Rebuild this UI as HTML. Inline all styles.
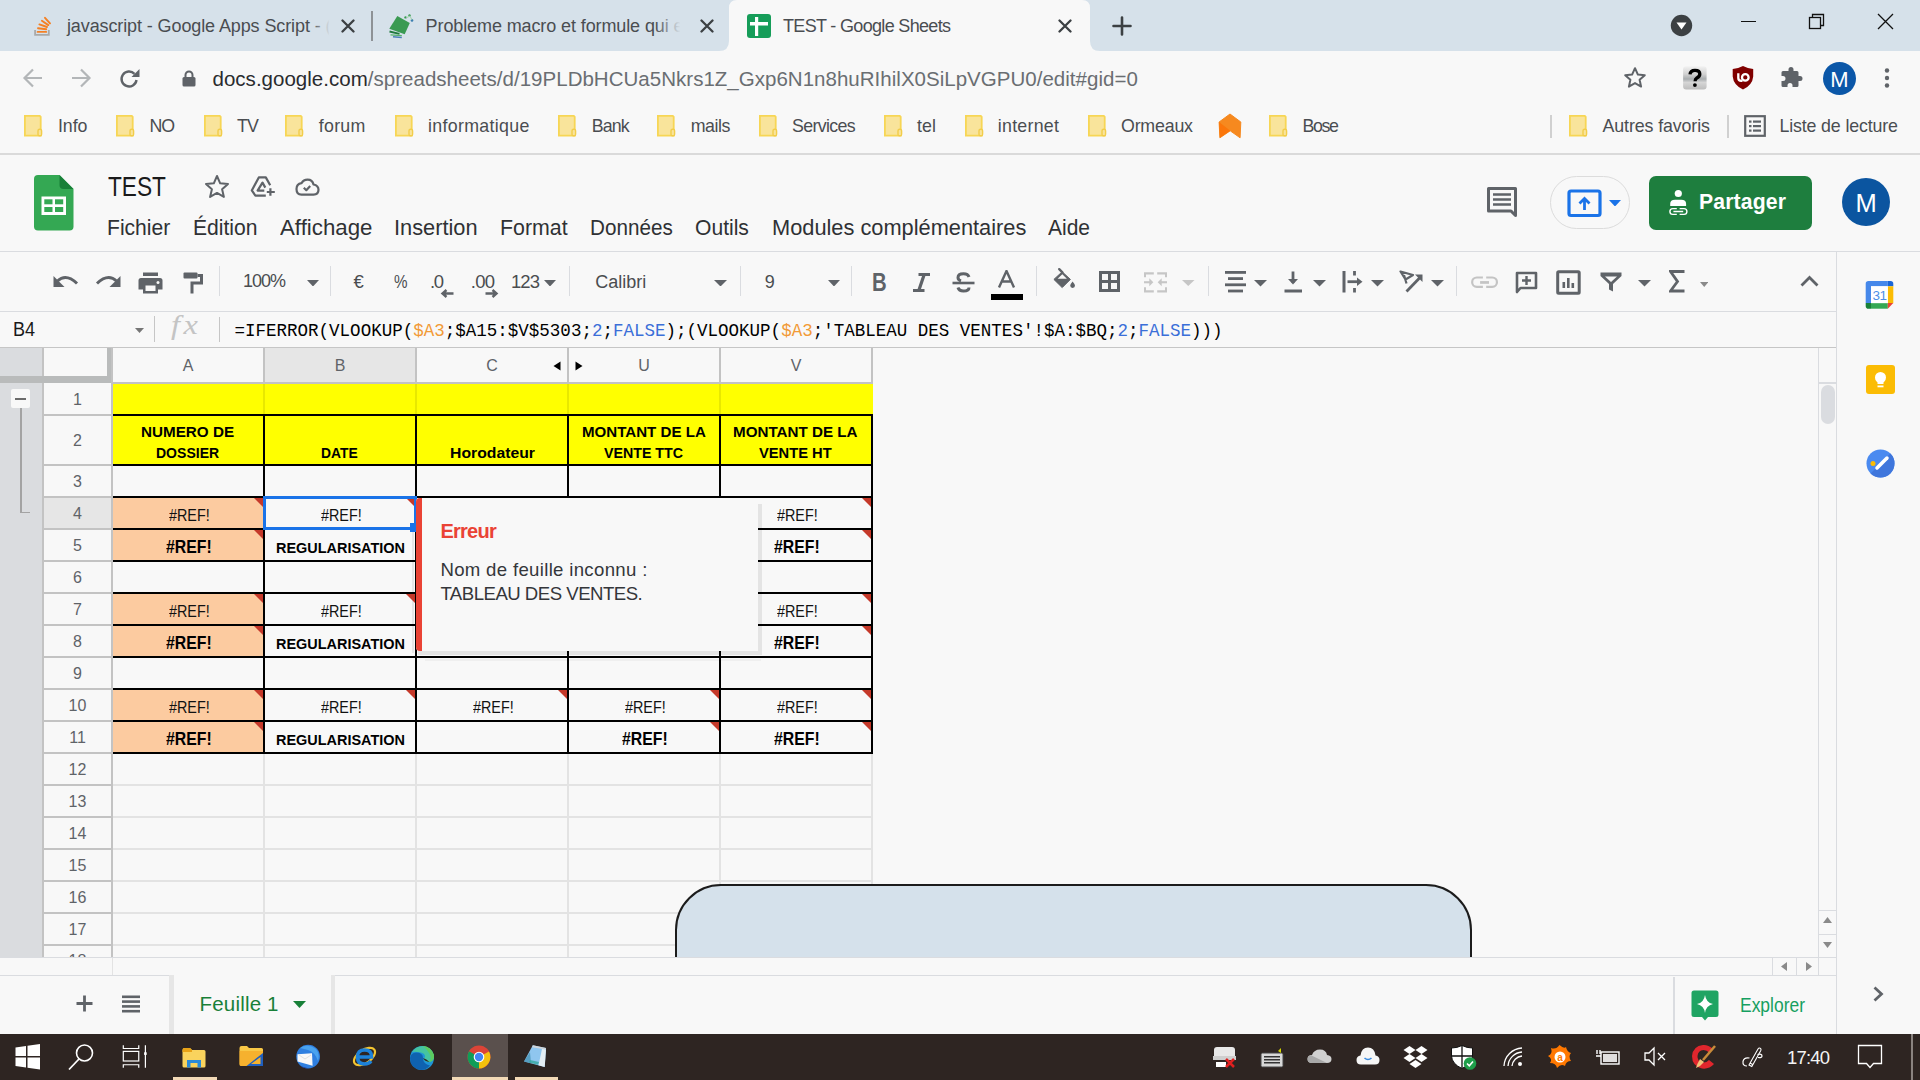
<!DOCTYPE html>
<html><head><meta charset="utf-8"><title>TEST - Google Sheets</title>
<style>
html,body{margin:0;padding:0;}
body{width:1920px;height:1080px;overflow:hidden;position:relative;background:#f8f8f8;font-family:"Liberation Sans",sans-serif;}
.t{position:absolute;white-space:pre;line-height:1;}
.r{position:absolute;display:block;}
</style></head><body>
<div class="r" style="left:0px;top:0px;width:1920px;height:51px;background:#d6e1ea;"></div>
<svg class="r" style="left:719px;top:0px;" width="382" height="51" viewBox="0 0 382 51"><path d="M0 51 Q10 51 10 41 L10 8 Q10 0 18 0 L363 0 Q371 0 371 8 L371 41 Q371 51 381 51 Z" fill="#f8f8f8"/></svg>
<svg class="r" style="left:28px;top:12px;" width="30" height="30" viewBox="0 0 30 30"><path d="M7.1 18 V22.9 H20.8 V18" fill="none" stroke="#a9a9a9" stroke-width="1.8"/><g stroke="#f48024" stroke-width="1.9" stroke-linecap="round"><line x1="9.6" y1="19.9" x2="18.2" y2="19.9"/><line x1="10" y1="16.2" x2="18.2" y2="17.3"/><line x1="11.4" y1="12.4" x2="19" y2="15"/><line x1="13.9" y1="8.8" x2="20.3" y2="13.1"/><line x1="17" y1="5.8" x2="22" y2="11.4"/></g></svg>
<div class="t" style="left:66.94px;top:16.76px;font-size:18.00px;color:#4a4d51;letter-spacing:-0.105px;">javascript - Google Apps Script - (</div>
<div class="r" style="left:312px;top:10px;width:22px;height:32px;background:linear-gradient(90deg,rgba(214,225,234,0),#d6e1ea 80%);"></div>
<svg class="r" style="left:341px;top:18.5px;" width="14" height="14" viewBox="0 0 14 14"><path d="M1.5 1.5 L12.5 12.5 M12.5 1.5 L1.5 12.5" stroke="#3c4043" stroke-width="2.3" stroke-linecap="round"/></svg>
<div class="r" style="left:371px;top:11px;width:2px;height:30px;background:#8e9296;"></div>
<svg class="r" style="left:384px;top:10px;" width="34" height="32" viewBox="0 0 34 32"><path d="M13.3 5.9 L25.8 13 L20.7 24.3 L5.3 18.7 Z" fill="#3a9a52"/><path d="M5.5 21.5 L15.5 23.8" stroke="#217a3e" stroke-width="1.8"/><path d="M6.5 24.8 L17.8 25.6" stroke="#55b06a" stroke-width="1.3"/><path d="M9 26.8 L17.8 27.5" stroke="#4a7fb8" stroke-width="1.4"/><circle cx="21.5" cy="7.4" r="1.2" fill="#3a9a52"/><circle cx="25.5" cy="5.4" r="1.2" fill="#3a9a52"/><circle cx="28" cy="10.4" r="1.3" fill="#3c7fb0"/><path d="M22 8 L26 6 L28 10" fill="none" stroke="#9fd0aa" stroke-width="1"/></svg>
<div class="t" style="left:425.60px;top:16.76px;font-size:18.00px;color:#4a4d51;letter-spacing:-0.106px;">Probleme macro et formule qui e</div>
<div class="r" style="left:655px;top:10px;width:30px;height:32px;background:linear-gradient(90deg,rgba(214,225,234,0),#d6e1ea 85%);"></div>
<svg class="r" style="left:699.5px;top:18.5px;" width="14" height="14" viewBox="0 0 14 14"><path d="M1.5 1.5 L12.5 12.5 M12.5 1.5 L1.5 12.5" stroke="#3c4043" stroke-width="2.3" stroke-linecap="round"/></svg>
<svg class="r" style="left:747px;top:14px;" width="24" height="24" viewBox="0 0 24 24"><rect x="0" y="0" width="24" height="24" rx="3" fill="#169d59"/><rect x="3" y="8" width="18" height="3.5" fill="#fff"/><rect x="8" y="3" width="3.2" height="19" fill="#fff"/></svg>
<div class="t" style="left:783.00px;top:16.76px;font-size:18.00px;color:#4a4d51;letter-spacing:-0.669px;">TEST - Google Sheets</div>
<svg class="r" style="left:1058px;top:18.5px;" width="14" height="14" viewBox="0 0 14 14"><path d="M1.5 1.5 L12.5 12.5 M12.5 1.5 L1.5 12.5" stroke="#3c4043" stroke-width="2.3" stroke-linecap="round"/></svg>
<svg class="r" style="left:1112px;top:16px;" width="20" height="20" viewBox="0 0 20 20"><path d="M10 1.5 V18.5 M1.5 10 H18.5" stroke="#3c4043" stroke-width="2.6" stroke-linecap="round"/></svg>
<svg class="r" style="left:1670px;top:14px;" width="23" height="23" viewBox="0 0 23 23"><circle cx="11.5" cy="11.5" r="10.7" fill="#3c4043"/><path d="M6.5 8.5 L16.5 8.5 L11.5 15.5 Z" fill="#fff"/></svg>
<div class="r" style="left:1741px;top:20.5px;width:15px;height:1.5px;background:#111;"></div>
<svg class="r" style="left:1808px;top:13px;" width="18" height="18" viewBox="0 0 18 18"><rect x="1.5" y="4.5" width="11" height="11" fill="none" stroke="#111" stroke-width="1.3"/><path d="M4.5 4.5 V1.5 H15.5 V12.5 H12.5" fill="none" stroke="#111" stroke-width="1.3"/></svg>
<svg class="r" style="left:1877px;top:13px;" width="17" height="17" viewBox="0 0 17 17"><path d="M1 1 L16 16 M16 1 L1 16" stroke="#111" stroke-width="1.3"/></svg>
<div class="r" style="left:0px;top:51px;width:1920px;height:102px;background:#f8f8f8;"></div>
<svg class="r" style="left:22px;top:67px;" width="22" height="22" viewBox="0 0 22 22"><path d="M20 11 H3 M11 2.5 L2.5 11 L11 19.5" fill="none" stroke="#b3b6b8" stroke-width="2.2"/></svg>
<svg class="r" style="left:70px;top:67px;" width="22" height="22" viewBox="0 0 22 22"><path d="M2 11 H19 M11 2.5 L19.5 11 L11 19.5" fill="none" stroke="#b3b6b8" stroke-width="2.2"/></svg>
<svg class="r" style="left:118px;top:67px;" width="24" height="24" viewBox="0 0 24 24"><path d="M18.5 13 A7.5 7.5 0 1 1 16.5 6.8" fill="none" stroke="#5f6368" stroke-width="2.4"/><path d="M21.5 2 V10 H13.5 Z" fill="#5f6368"/></svg>
<svg class="r" style="left:182px;top:70px;" width="14" height="17" viewBox="0 0 14 17"><path d="M3.5 7.5 V5 A3.5 3.5 0 0 1 10.5 5 V7.5" fill="none" stroke="#5f6368" stroke-width="2"/><rect x="0.5" y="7" width="13" height="9.5" rx="1.5" fill="#5f6368"/></svg>
<div class="t" style="left:212.5px;top:69.25px;font-size:20.5px;color:#6a6e72;letter-spacing:0.02px"><span style="color:#2a2b2e">docs.google.com</span>/spreadsheets/d/19PLDbHCUa5Nkrs1Z_Gxp6N1n8huRIhilX0SiLpVGPU0/edit#gid=0</div>
<svg class="r" style="left:1623px;top:66px;" width="24" height="24" viewBox="0 0 24 24"><path d="M12 2.2 L14.9 8.6 L21.8 9.2 L16.6 13.8 L18.1 20.6 L12 17.1 L5.9 20.6 L7.4 13.8 L2.2 9.2 L9.1 8.6 Z" fill="none" stroke="#5f6368" stroke-width="2" stroke-linejoin="round"/></svg>
<svg class="r" style="left:1678px;top:62px;" width="82" height="32" viewBox="0 0 82 32"><defs><linearGradient id="gq" x1="0" y1="0" x2="0" y2="1"><stop offset="0" stop-color="#f2f2f2"/><stop offset="0.35" stop-color="#d0d0d0"/><stop offset="0.55" stop-color="#a8acae"/><stop offset="0.7" stop-color="#d6d6d6"/><stop offset="1" stop-color="#bdbdbd"/></linearGradient></defs><rect x="5.1" y="4.3" width="23.5" height="23.1" rx="3" fill="url(#gq)"/><path d="M12 12.4 Q12.3 8.3 17 8.3 Q21.8 8.3 21.8 12 Q21.8 14.5 18.8 16 Q17.1 17 17.1 19.3" fill="none" stroke="#000" stroke-width="3.3"/><circle cx="16.9" cy="23.1" r="1.9" fill="#000"/><path d="M65 4.1 Q70 6.8 75.2 7 V14.5 Q74.5 23 65 27.6 Q55.5 23 54.7 14.5 V7 Q60 6.8 65 4.1 Z" fill="#800000"/><path d="M60.3 11.2 V16 Q60.3 18.8 63.3 18.8 H64.5" fill="none" stroke="#fff" stroke-width="2.3"/><circle cx="67.3" cy="15.4" r="3.3" fill="none" stroke="#fff" stroke-width="2.3"/></svg>
<svg class="r" style="left:1780px;top:66px;" width="24" height="24" viewBox="0 0 24 24"><path d="M8.5 3.5 A2.5 2.5 0 0 1 13.5 3.5 V5 H17 A1.5 1.5 0 0 1 18.5 6.5 V10 H20 A2.5 2.5 0 0 1 20 15 H18.5 V19.5 A1.5 1.5 0 0 1 17 21 H12.5 V19.5 A2.5 2.5 0 0 0 7.5 19.5 V21 H3 A1.5 1.5 0 0 1 1.5 19.5 V15 H3 A2.5 2.5 0 0 0 3 10 H1.5 V6.5 A1.5 1.5 0 0 1 3 5 H8.5 Z" fill="#5f6368"/></svg>
<svg class="r" style="left:1823px;top:62px;" width="33" height="33" viewBox="0 0 33 33"><circle cx="16.5" cy="16.5" r="16.5" fill="#0b57a8"/><text x="16.5" y="24.5" text-anchor="middle" font-family="Liberation Sans" font-size="22" fill="#fff">M</text></svg>
<svg class="r" style="left:1883px;top:68px;" width="8" height="20" viewBox="0 0 8 20"><circle cx="4" cy="2.5" r="2.2" fill="#5f6368"/><circle cx="4" cy="10" r="2.2" fill="#5f6368"/><circle cx="4" cy="17.5" r="2.2" fill="#5f6368"/></svg>
<svg class="r" style="left:24px;top:115px;" width="19" height="22" viewBox="0 0 19 22"><path d="M0.9 0.9 H15.8 L16.7 1.8 V20.6 H0.9 Z" fill="#f9e49b" stroke="#f7d655" stroke-width="1.8"/><rect x="14" y="14.2" width="3.6" height="6.6" rx="1.6" fill="#f9e49b" stroke="#f2cd4a" stroke-width="1.4"/></svg>
<div class="t" style="left:57.90px;top:118.03px;font-size:17.80px;color:#4a4d51;letter-spacing:-0.042px;">Info</div>
<svg class="r" style="left:116px;top:115px;" width="19" height="22" viewBox="0 0 19 22"><path d="M0.9 0.9 H15.8 L16.7 1.8 V20.6 H0.9 Z" fill="#f9e49b" stroke="#f7d655" stroke-width="1.8"/><rect x="14" y="14.2" width="3.6" height="6.6" rx="1.6" fill="#f9e49b" stroke="#f2cd4a" stroke-width="1.4"/></svg>
<div class="t" style="left:149.40px;top:118.03px;font-size:17.80px;color:#4a4d51;letter-spacing:-1.100px;">NO</div>
<svg class="r" style="left:204px;top:115px;" width="19" height="22" viewBox="0 0 19 22"><path d="M0.9 0.9 H15.8 L16.7 1.8 V20.6 H0.9 Z" fill="#f9e49b" stroke="#f7d655" stroke-width="1.8"/><rect x="14" y="14.2" width="3.6" height="6.6" rx="1.6" fill="#f9e49b" stroke="#f2cd4a" stroke-width="1.4"/></svg>
<div class="t" style="left:236.90px;top:118.03px;font-size:17.80px;color:#4a4d51;letter-spacing:-0.784px;">TV</div>
<svg class="r" style="left:285px;top:115px;" width="19" height="22" viewBox="0 0 19 22"><path d="M0.9 0.9 H15.8 L16.7 1.8 V20.6 H0.9 Z" fill="#f9e49b" stroke="#f7d655" stroke-width="1.8"/><rect x="14" y="14.2" width="3.6" height="6.6" rx="1.6" fill="#f9e49b" stroke="#f2cd4a" stroke-width="1.4"/></svg>
<div class="t" style="left:318.75px;top:118.03px;font-size:17.80px;color:#4a4d51;letter-spacing:0.283px;">forum</div>
<svg class="r" style="left:395px;top:115px;" width="19" height="22" viewBox="0 0 19 22"><path d="M0.9 0.9 H15.8 L16.7 1.8 V20.6 H0.9 Z" fill="#f9e49b" stroke="#f7d655" stroke-width="1.8"/><rect x="14" y="14.2" width="3.6" height="6.6" rx="1.6" fill="#f9e49b" stroke="#f2cd4a" stroke-width="1.4"/></svg>
<div class="t" style="left:428.00px;top:118.03px;font-size:17.80px;color:#4a4d51;letter-spacing:0.327px;">informatique</div>
<svg class="r" style="left:558px;top:115px;" width="19" height="22" viewBox="0 0 19 22"><path d="M0.9 0.9 H15.8 L16.7 1.8 V20.6 H0.9 Z" fill="#f9e49b" stroke="#f7d655" stroke-width="1.8"/><rect x="14" y="14.2" width="3.6" height="6.6" rx="1.6" fill="#f9e49b" stroke="#f2cd4a" stroke-width="1.4"/></svg>
<div class="t" style="left:591.75px;top:118.03px;font-size:17.80px;color:#4a4d51;letter-spacing:-0.854px;">Bank</div>
<svg class="r" style="left:657px;top:115px;" width="19" height="22" viewBox="0 0 19 22"><path d="M0.9 0.9 H15.8 L16.7 1.8 V20.6 H0.9 Z" fill="#f9e49b" stroke="#f7d655" stroke-width="1.8"/><rect x="14" y="14.2" width="3.6" height="6.6" rx="1.6" fill="#f9e49b" stroke="#f2cd4a" stroke-width="1.4"/></svg>
<div class="t" style="left:690.75px;top:118.03px;font-size:17.80px;color:#4a4d51;letter-spacing:-0.444px;">mails</div>
<svg class="r" style="left:758.75px;top:115px;" width="19" height="22" viewBox="0 0 19 22"><path d="M0.9 0.9 H15.8 L16.7 1.8 V20.6 H0.9 Z" fill="#f9e49b" stroke="#f7d655" stroke-width="1.8"/><rect x="14" y="14.2" width="3.6" height="6.6" rx="1.6" fill="#f9e49b" stroke="#f2cd4a" stroke-width="1.4"/></svg>
<div class="t" style="left:792.00px;top:118.03px;font-size:17.80px;color:#4a4d51;letter-spacing:-0.653px;">Services</div>
<svg class="r" style="left:883.75px;top:115px;" width="19" height="22" viewBox="0 0 19 22"><path d="M0.9 0.9 H15.8 L16.7 1.8 V20.6 H0.9 Z" fill="#f9e49b" stroke="#f7d655" stroke-width="1.8"/><rect x="14" y="14.2" width="3.6" height="6.6" rx="1.6" fill="#f9e49b" stroke="#f2cd4a" stroke-width="1.4"/></svg>
<div class="t" style="left:917.00px;top:118.03px;font-size:17.80px;color:#4a4d51;letter-spacing:0.066px;">tel</div>
<svg class="r" style="left:965px;top:115px;" width="19" height="22" viewBox="0 0 19 22"><path d="M0.9 0.9 H15.8 L16.7 1.8 V20.6 H0.9 Z" fill="#f9e49b" stroke="#f7d655" stroke-width="1.8"/><rect x="14" y="14.2" width="3.6" height="6.6" rx="1.6" fill="#f9e49b" stroke="#f2cd4a" stroke-width="1.4"/></svg>
<div class="t" style="left:997.80px;top:118.03px;font-size:17.80px;color:#4a4d51;letter-spacing:0.250px;">internet</div>
<svg class="r" style="left:1088px;top:115px;" width="19" height="22" viewBox="0 0 19 22"><path d="M0.9 0.9 H15.8 L16.7 1.8 V20.6 H0.9 Z" fill="#f9e49b" stroke="#f7d655" stroke-width="1.8"/><rect x="14" y="14.2" width="3.6" height="6.6" rx="1.6" fill="#f9e49b" stroke="#f2cd4a" stroke-width="1.4"/></svg>
<div class="t" style="left:1121.00px;top:118.03px;font-size:17.80px;color:#4a4d51;letter-spacing:-0.193px;">Ormeaux</div>
<svg class="r" style="left:1268.75px;top:115px;" width="19" height="22" viewBox="0 0 19 22"><path d="M0.9 0.9 H15.8 L16.7 1.8 V20.6 H0.9 Z" fill="#f9e49b" stroke="#f7d655" stroke-width="1.8"/><rect x="14" y="14.2" width="3.6" height="6.6" rx="1.6" fill="#f9e49b" stroke="#f2cd4a" stroke-width="1.4"/></svg>
<div class="t" style="left:1302.50px;top:118.03px;font-size:17.80px;color:#4a4d51;letter-spacing:-1.361px;">Bose</div>
<svg class="r" style="left:1210px;top:108px;" width="40" height="37" viewBox="0 0 40 37"><path d="M20 6 L30.8 14 L30.1 29.8 L20.2 22.8 L9.9 29.8 L9.1 14 Z" fill="#f6891f" stroke="#f6891f" stroke-width="1" stroke-linejoin="round"/><path d="M9.1 14 L20.2 22.8 L9.9 29.8 Z" fill="#fb760a"/></svg>
<div class="r" style="left:1550px;top:115px;width:1.5px;height:23px;background:#d0d0d0;"></div>
<svg class="r" style="left:1568.75px;top:115px;" width="19" height="22" viewBox="0 0 19 22"><path d="M0.9 0.9 H15.8 L16.7 1.8 V20.6 H0.9 Z" fill="#f9e49b" stroke="#f7d655" stroke-width="1.8"/><rect x="14" y="14.2" width="3.6" height="6.6" rx="1.6" fill="#f9e49b" stroke="#f2cd4a" stroke-width="1.4"/></svg>
<div class="t" style="left:1602.50px;top:118.03px;font-size:17.80px;color:#4a4d51;letter-spacing:-0.097px;">Autres favoris</div>
<div class="r" style="left:1727px;top:115px;width:1.5px;height:23px;background:#d0d0d0;"></div>
<svg class="r" style="left:1744px;top:115px;" width="22" height="22" viewBox="0 0 22 22"><rect x="1.2" y="1.2" width="19.6" height="19.6" fill="none" stroke="#5f6368" stroke-width="2.2"/><g fill="#5f6368"><rect x="5" y="5.5" width="2.5" height="2.2"/><rect x="9" y="5.5" width="8" height="2.2"/><rect x="5" y="10" width="2.5" height="2.2"/><rect x="9" y="10" width="8" height="2.2"/><rect x="5" y="14.5" width="2.5" height="2.2"/><rect x="9" y="14.5" width="8" height="2.2"/></g></svg>
<div class="t" style="left:1779.50px;top:118.03px;font-size:17.80px;color:#4a4d51;letter-spacing:-0.146px;">Liste de lecture</div>
<div class="r" style="left:0px;top:153px;width:1920px;height:2px;background:#dadada;"></div>
<svg class="r" style="left:34px;top:175px;" width="40" height="56" viewBox="0 0 40 56"><path d="M4 0 H25.5 L39.5 14 V51.5 Q39.5 55.5 35.5 55.5 H4 Q0 55.5 0 51.5 V4 Q0 0 4 0 Z" fill="#34a853"/><path d="M25.5 0 L39.5 14 H29.5 Q25.5 14 25.5 10 Z" fill="#188038"/><rect x="7.5" y="21.5" width="24.5" height="18.5" fill="#fff"/><rect x="10.3" y="24.3" width="8.2" height="5" fill="#34a853"/><rect x="21" y="24.3" width="8.2" height="5" fill="#34a853"/><rect x="10.3" y="32" width="8.2" height="5" fill="#34a853"/><rect x="21" y="32" width="8.2" height="5" fill="#34a853"/></svg>
<div class="t" style="left:108.30px;top:173.30px;font-size:28.00px;color:#1a1a1a;transform:scaleX(0.8092);transform-origin:0.00px 0;">TEST</div>
<svg class="r" style="left:204px;top:174px;" width="26" height="25" viewBox="0 0 26 25"><path d="M13 2 L16.2 9.3 L24 10 L18.1 15.2 L19.9 22.9 L13 18.9 L6.1 22.9 L7.9 15.2 L2 10 L9.8 9.3 Z" fill="none" stroke="#5f6368" stroke-width="2" stroke-linejoin="round"/></svg>
<svg class="r" style="left:245px;top:170px;" width="80" height="32" viewBox="0 0 80 32"><g fill="none" stroke="#5f6368" stroke-width="2.2" stroke-linejoin="round"><path d="M25.2 15.3 L20.8 7.4 H13.8 L6.8 20.4 L10.4 25.6 H20.8"/><path d="M20.3 17.6 L17.5 12.6 L12.6 20.6 H19.3"/><path d="M25.4 18.2 V25.8 M21.8 22 H29.8"/><path d="M56.5 24.6 Q51.5 24.6 51.5 19 Q51.5 14 56.5 13.2 Q58.5 9.6 62.5 9.6 Q67.5 9.6 68.5 14.5 Q73.5 15.5 73.5 19.8 Q73.5 24.6 68.5 24.6 Z"/><path d="M58.8 17.8 L61.3 20.2 L65.2 16"/></g></svg>
<div class="t" style="left:107.00px;top:216.55px;font-size:21.80px;color:#2f3134;transform:scaleX(0.9679);transform-origin:0.00px 0;">Fichier</div>
<div class="t" style="left:193.00px;top:216.55px;font-size:21.80px;color:#2f3134;transform:scaleX(0.9684);transform-origin:0.00px 0;">Édition</div>
<div class="t" style="left:280.00px;top:216.55px;font-size:21.80px;color:#2f3134;transform:scaleX(1.0213);transform-origin:0.00px 0;">Affichage</div>
<div class="t" style="left:394.00px;top:216.55px;font-size:21.80px;color:#2f3134;transform:scaleX(0.9999);transform-origin:0.00px 0;">Insertion</div>
<div class="t" style="left:500.00px;top:216.55px;font-size:21.80px;color:#2f3134;transform:scaleX(0.9797);transform-origin:0.00px 0;">Format</div>
<div class="t" style="left:590.00px;top:216.55px;font-size:21.80px;color:#2f3134;transform:scaleX(0.9484);transform-origin:0.00px 0;">Données</div>
<div class="t" style="left:695.00px;top:216.55px;font-size:21.80px;color:#2f3134;transform:scaleX(0.9676);transform-origin:0.00px 0;">Outils</div>
<div class="t" style="left:771.70px;top:216.55px;font-size:21.80px;color:#2f3134;transform:scaleX(0.9996);transform-origin:0.00px 0;">Modules complémentaires</div>
<div class="t" style="left:1048.00px;top:216.55px;font-size:21.80px;color:#2f3134;transform:scaleX(0.9633);transform-origin:0.00px 0;">Aide</div>
<svg class="r" style="left:1486px;top:186px;" width="32" height="31" viewBox="0 0 32 31"><path d="M2.5 2.5 H29.5 V25 L29.5 29.5 L25 25 H2.5 Z" fill="none" stroke="#5f6368" stroke-width="3" stroke-linejoin="round"/><path d="M7 8.5 H25 M7 13.5 H25 M7 18.5 H25" stroke="#5f6368" stroke-width="2.6"/></svg>
<div class="r" style="left:1550px;top:176px;width:80px;height:53px;border:1px solid #dcdcdc;border-radius:27px;box-sizing:border-box"></div>
<svg class="r" style="left:1567px;top:189px;" width="36" height="29" viewBox="0 0 36 29"><rect x="2" y="2" width="31" height="24.5" rx="2" fill="none" stroke="#1a73e8" stroke-width="3.2"/><path d="M17.5 21 V10 M12.5 14.5 L17.5 9.5 L22.5 14.5" fill="none" stroke="#1a73e8" stroke-width="2.8"/></svg>
<svg class="r" style="left:1609px;top:199.5px;" width="12" height="6.5" viewBox="0 0 12 6.5"><path d="M0 0 H12 L6.0 6.5 Z" fill="#1a73e8"/></svg>
<div class="r" style="left:1649px;top:176px;width:163px;height:54px;background:#1e7e3e;border-radius:7px"></div>
<svg class="r" style="left:1660px;top:182px;" width="36" height="36" viewBox="0 0 36 36"><circle cx="18.3" cy="11.5" r="3.6" fill="#fff"/><path d="M10.2 24.1 V22 Q10.2 17.8 15 17.8 H21.3 Q26.1 17.8 26.1 22 V24.1 Z" fill="#fff"/><g fill="none" stroke="#fff" stroke-width="1.4"><path d="M16.8 26.6 H12.8 A2.9 2.9 0 0 0 12.8 32.4 H16.8 M19.6 26.6 H24 A2.9 2.9 0 0 1 24 32.4 H19.6 M13.4 29.5 H23.2"/></g></svg>
<div class="t" style="left:1699.00px;top:191.05px;font-size:21.20px;color:#fff;font-weight:700;letter-spacing:0.133px;">Partager</div>
<svg class="r" style="left:1842px;top:178px;" width="48" height="48" viewBox="0 0 48 48"><circle cx="24" cy="24" r="24" fill="#0b55a0"/><text x="24" y="33.5" text-anchor="middle" font-family="Liberation Sans" font-size="25.5" fill="#fff">M</text></svg>
<div class="r" style="left:0px;top:251px;width:1920px;height:1px;background:#dadce0;"></div>
<svg class="r" style="left:53px;top:274px;" width="26" height="15" viewBox="0 0 26 15"><path d="M4.5 7 Q13 -1 24 9.5" fill="none" stroke="#5f6368" stroke-width="3"/><path d="M0.5 2 V13 H11.5 Z" fill="#5f6368"/></svg>
<svg class="r" style="left:95px;top:274px;" width="26" height="15" viewBox="0 0 26 15"><path d="M21.5 7 Q13 -1 2 9.5" fill="none" stroke="#5f6368" stroke-width="3"/><path d="M25.5 2 V13 H14.5 Z" fill="#5f6368"/></svg>
<svg class="r" style="left:138px;top:272px;" width="25" height="22" viewBox="0 0 25 22"><rect x="5" y="0.5" width="15" height="3.5" fill="#5f6368"/><path d="M3 6 H22 Q24.5 6 24.5 8.5 V17.5 H20 V21.5 H5 V17.5 H0.5 V8.5 Q0.5 6 3 6 Z" fill="#5f6368"/><rect x="7.5" y="13.5" width="10" height="5.5" fill="#f8f8f8"/><circle cx="20" cy="10.5" r="1.5" fill="#f8f8f8"/></svg>
<svg class="r" style="left:183px;top:272px;" width="20" height="22" viewBox="0 0 20 22"><rect x="0.5" y="0.5" width="14" height="6" rx="1" fill="#5f6368"/><path d="M14.5 3.5 H18.5 V11 H9 V21.5" fill="none" stroke="#5f6368" stroke-width="3"/></svg>
<div class="r" style="left:219px;top:266px;width:1px;height:30px;background:#dadce0;"></div>
<div class="t" style="left:243.00px;top:271.76px;font-size:18.00px;color:#4a4d50;letter-spacing:-1.027px;">100%</div>
<svg class="r" style="left:306.5px;top:279.5px;" width="12" height="6.5" viewBox="0 0 12 6.5"><path d="M0 0 H12 L6.0 6.5 Z" fill="#5f6368"/></svg>
<div class="r" style="left:330px;top:266px;width:1px;height:30px;background:#dadce0;"></div>
<div class="t" style="left:353.60px;top:272.94px;font-size:18.50px;color:#4a4d50;">€</div>
<div class="t" style="left:394.00px;top:272.94px;font-size:18.50px;color:#4a4d50;transform:scaleX(0.8199);transform-origin:0.00px 0;">%</div>
<div class="t" style="left:430.00px;top:272.94px;font-size:18.50px;color:#4a4d50;letter-spacing:-1.355px;">.0</div>
<svg class="r" style="left:440px;top:289px;" width="14" height="9" viewBox="0 0 14 9"><path d="M13.5 4.5 H3 M6.5 1 L2.5 4.5 L6.5 8" fill="none" stroke="#5f6368" stroke-width="2.4"/></svg>
<div class="t" style="left:470.80px;top:272.94px;font-size:18.50px;color:#4a4d50;letter-spacing:-0.758px;">.00</div>
<svg class="r" style="left:485px;top:289px;" width="14" height="9" viewBox="0 0 14 9"><path d="M0.5 4.5 H11 M7.5 1 L11.5 4.5 L7.5 8" fill="none" stroke="#5f6368" stroke-width="2.4"/></svg>
<div class="t" style="left:511.00px;top:272.64px;font-size:18.50px;color:#4a4d50;letter-spacing:-0.947px;">123</div>
<svg class="r" style="left:543.5px;top:279.7px;" width="12" height="6.5" viewBox="0 0 12 6.5"><path d="M0 0 H12 L6.0 6.5 Z" fill="#5f6368"/></svg>
<div class="r" style="left:569px;top:266px;width:1px;height:30px;background:#dadce0;"></div>
<div class="t" style="left:595.30px;top:272.76px;font-size:18.00px;color:#4a4d50;letter-spacing:0.010px;">Calibri</div>
<svg class="r" style="left:714px;top:279.7px;" width="13" height="6.5" viewBox="0 0 13 6.5"><path d="M0 0 H13 L6.5 6.5 Z" fill="#5f6368"/></svg>
<div class="r" style="left:740px;top:266px;width:1px;height:30px;background:#dadce0;"></div>
<div class="t" style="left:764.70px;top:272.76px;font-size:18.00px;color:#4a4d50;">9</div>
<svg class="r" style="left:827.5px;top:279.7px;" width="12" height="6.5" viewBox="0 0 12 6.5"><path d="M0 0 H12 L6.0 6.5 Z" fill="#5f6368"/></svg>
<div class="r" style="left:851px;top:266px;width:1px;height:30px;background:#dadce0;"></div>
<div class="t" style="left:872.00px;top:269.74px;font-size:25.00px;color:#5f6368;font-weight:700;transform:scaleX(0.8111);transform-origin:0.00px 0;">B</div>
<svg class="r" style="left:912px;top:273px;" width="19" height="19" viewBox="0 0 19 19"><path d="M6.5 1.5 H18 M1 17.5 H12.5 M12.2 1.5 L6.8 17.5" fill="none" stroke="#5f6368" stroke-width="3.2"/></svg>
<svg class="r" style="left:952px;top:272px;" width="23" height="21" viewBox="0 0 23 21"><path d="M0.5 11 H22.5" stroke="#5f6368" stroke-width="2.6"/><path d="M17 5 Q16 1.8 11.5 1.8 Q6 1.8 6 5.5 Q6 8 9 9" fill="none" stroke="#5f6368" stroke-width="3"/><path d="M6 15.5 Q7 19 11.5 19 Q17 19 17 15.5" fill="none" stroke="#5f6368" stroke-width="3"/></svg>
<svg class="r" style="left:998px;top:270px;" width="17" height="18" viewBox="0 0 17 18"><path d="M1 17.5 L8.5 1 L16 17.5 M4 11.5 H13" fill="none" stroke="#5f6368" stroke-width="2.4"/></svg>
<div class="r" style="left:991px;top:294px;width:32px;height:6px;background:#000;"></div>
<div class="r" style="left:1036px;top:266px;width:1px;height:30px;background:#dadce0;"></div>
<svg class="r" style="left:1045px;top:263px;" width="32" height="30" viewBox="0 0 32 30"><path d="M14.2 6.2 L17.4 9.3" stroke="#5f6368" stroke-width="2.4" stroke-linecap="round"/><path d="M17.2 8.8 L25.4 16.4 L17.2 24.6 L8.9 16.4 Z" fill="#5f6368" stroke="#5f6368" stroke-width="1" stroke-linejoin="round"/><path d="M17.3 11.2 L21.9 15.7 H12.6 Z" fill="#f8f8f8"/><path d="M27.6 18.6 Q30 21.5 30 22.6 A2.4 2.4 0 0 1 25.2 22.6 Q25.2 21.5 27.6 18.6 Z" fill="#5f6368"/></svg>
<svg class="r" style="left:1099px;top:271px;" width="21" height="21" viewBox="0 0 21 21"><rect x="1.5" y="1.5" width="18" height="18" fill="none" stroke="#5f6368" stroke-width="3"/><path d="M10.5 1.5 V19.5 M1.5 10.5 H19.5" stroke="#5f6368" stroke-width="3"/></svg>
<svg class="r" style="left:1136px;top:265px;" width="40" height="35" viewBox="0 0 40 35"><g fill="#c6c6c6"><path d="M8 7.2 H17.8 V9.5 H10 V12.3 H8 Z"/><path d="M31 7.2 H21.2 V9.5 H29 V12.3 H31 Z"/><path d="M8 27.5 H17.8 V25.2 H10 V22.2 H8 Z"/><path d="M31 27.5 H21.2 V25.2 H29 V22.2 H31 Z"/><rect x="8" y="16.2" width="6.5" height="2.1"/><path d="M13.3 13.3 L17.3 17.25 L13.3 21.3 Z"/><rect x="24.5" y="16.2" width="6.5" height="2.1"/><path d="M25.7 13.3 L21.7 17.25 L25.7 21.3 Z"/></g></svg>
<svg class="r" style="left:1182px;top:280px;" width="12.5" height="6" viewBox="0 0 12.5 6"><path d="M0 0 H12.5 L6.25 6 Z" fill="#c6c6c6"/></svg>
<div class="r" style="left:1208px;top:266px;width:1px;height:30px;background:#dadce0;"></div>
<svg class="r" style="left:1225px;top:271px;" width="22" height="22" viewBox="0 0 22 22"><g fill="#5f6368"><rect x="0" y="0" width="21" height="2.8"/><rect x="3" y="6.2" width="15" height="2.8"/><rect x="0" y="12.4" width="21" height="2.8"/><rect x="3" y="18.6" width="15" height="2.8"/></g></svg>
<svg class="r" style="left:1254px;top:280px;" width="13" height="6.5" viewBox="0 0 13 6.5"><path d="M0 0 H13 L6.5 6.5 Z" fill="#5f6368"/></svg>
<svg class="r" style="left:1284px;top:271px;" width="19" height="22" viewBox="0 0 19 22"><path d="M9 0.5 V12" stroke="#5f6368" stroke-width="2.8"/><path d="M4 8 L9 13.5 L14 8 Z" fill="#5f6368"/><rect x="0.5" y="18.5" width="17.5" height="3" fill="#5f6368"/></svg>
<svg class="r" style="left:1313px;top:280px;" width="13" height="6.5" viewBox="0 0 13 6.5"><path d="M0 0 H13 L6.5 6.5 Z" fill="#5f6368"/></svg>
<svg class="r" style="left:1342px;top:271px;" width="22" height="22" viewBox="0 0 22 22"><rect x="0.5" y="0" width="3" height="21.5" fill="#5f6368"/><path d="M12.5 0 V4.5 M12.5 17 V21.5" stroke="#5f6368" stroke-width="2.8"/><path d="M5.5 10.7 H17" stroke="#5f6368" stroke-width="2.8"/><path d="M15 6.5 L20.5 10.7 L15 15 Z" fill="#5f6368"/></svg>
<svg class="r" style="left:1371px;top:280px;" width="13" height="6.5" viewBox="0 0 13 6.5"><path d="M0 0 H13 L6.5 6.5 Z" fill="#5f6368"/></svg>
<svg class="r" style="left:1399px;top:270px;" width="25" height="23" viewBox="0 0 25 23"><path d="M1.5 1.5 L14 5 L6.5 9.5 Z M5 5 L7.5 13.5" fill="none" stroke="#5f6368" stroke-width="2.2" stroke-linejoin="round"/><path d="M7.5 21.5 L21.5 7" stroke="#5f6368" stroke-width="2.8"/><path d="M23.5 4.5 V12 L16 4.5 Z" fill="#5f6368"/></svg>
<svg class="r" style="left:1430.5px;top:280px;" width="13" height="6.5" viewBox="0 0 13 6.5"><path d="M0 0 H13 L6.5 6.5 Z" fill="#5f6368"/></svg>
<div class="r" style="left:1456px;top:266px;width:1px;height:30px;background:#dadce0;"></div>
<svg class="r" style="left:1465px;top:266px;" width="40" height="32" viewBox="0 0 40 32"><path d="M17.9 11.5 H11.8 A4.65 4.65 0 0 0 11.8 20.8 H17.9 M21.2 11.5 H27.3 A4.65 4.65 0 0 1 27.3 20.8 H21.2" fill="none" stroke="#c4c4c4" stroke-width="2.2"/><rect x="15.1" y="15.1" width="8.9" height="2.7" fill="#c4c4c4"/></svg>
<svg class="r" style="left:1515px;top:271px;" width="23" height="23" viewBox="0 0 23 23"><path d="M2 2 H21 V17 H5.5 L2 21 Z" fill="none" stroke="#5f6368" stroke-width="2.6" stroke-linejoin="round"/><path d="M11.5 5 V14 M7 9.5 H16" stroke="#5f6368" stroke-width="2.4"/></svg>
<svg class="r" style="left:1556px;top:270px;" width="25" height="25" viewBox="0 0 25 25"><rect x="1.7" y="1.7" width="21.5" height="21.5" rx="1" fill="none" stroke="#5f6368" stroke-width="3"/><rect x="6.5" y="12" width="2.6" height="6" fill="#5f6368"/><rect x="11" y="8" width="2.6" height="10" fill="#5f6368"/><rect x="15.5" y="13" width="2.6" height="5" fill="#5f6368"/></svg>
<svg class="r" style="left:1600px;top:272px;" width="22" height="20" viewBox="0 0 22 20"><path d="M0.5 0.5 H21.5 V4 L13 12 V19.5 L9 17.5 V12 L0.5 4 Z M5 4.5 L11 10 L17 4.5 Z" fill="#5f6368" fill-rule="evenodd"/></svg>
<svg class="r" style="left:1638px;top:280px;" width="13" height="6.5" viewBox="0 0 13 6.5"><path d="M0 0 H13 L6.5 6.5 Z" fill="#5f6368"/></svg>
<svg class="r" style="left:1669px;top:270px;" width="16" height="23" viewBox="0 0 16 23"><path d="M15.5 1.5 H1.5 L8.5 11.5 L1.5 21 H15.5" fill="none" stroke="#5f6368" stroke-width="2.8"/></svg>
<svg class="r" style="left:1699.5px;top:282px;" width="8.5" height="5" viewBox="0 0 8.5 5"><path d="M0 0 H8.5 L4.25 5 Z" fill="#8a8a8a"/></svg>
<svg class="r" style="left:1800px;top:275px;" width="19" height="12" viewBox="0 0 19 12"><path d="M1.5 10.5 L9.5 2.5 L17.5 10.5" fill="none" stroke="#5f6368" stroke-width="2.8"/></svg>
<div class="r" style="left:0px;top:311px;width:1836px;height:1px;background:#dadce0;"></div>
<div class="t" style="left:13.00px;top:318.95px;font-size:20.50px;color:#1a1a1a;transform:scaleX(0.8796);transform-origin:0.00px 0;">B4</div>
<svg class="r" style="left:135px;top:328px;" width="9" height="5" viewBox="0 0 9 5"><path d="M0 0 H9 L4.5 5 Z" fill="#767676"/></svg>
<div class="r" style="left:153.5px;top:316px;width:1.5px;height:26px;background:#c6c6c6;"></div>
<div class="t" style="left:171px;top:312.28px;font-size:27px;color:#c4c4c4;font-family:'Liberation Serif',serif;font-style:italic;letter-spacing:3px;transform:scaleX(1.2);transform-origin:0 0">fx</div>
<div class="r" style="left:218.5px;top:316.5px;width:1.5px;height:25px;background:#c6c6c6;"></div>
<div class="t" style="left:234.5px;top:322.78px;font-size:17.52px;color:#000;font-family:'Liberation Mono',monospace"><span>=IFERROR(VLOOKUP(</span><span style="color:#f29a36">$A3</span>;$A15:$V$5303;<span style="color:#3b6fd8">2</span>;<span style="color:#3b6fd8">FALSE</span>);(VLOOKUP(<span style="color:#f29a36">$A3</span>;'TABLEAU DES VENTES'!$A:$BQ;<span style="color:#3b6fd8">2</span>;<span style="color:#3b6fd8">FALSE</span>)))</div>
<div class="r" style="left:0px;top:347px;width:1836px;height:1px;background:#c6c6c6;"></div>
<div class="r" style="left:1836px;top:252px;width:1px;height:782px;background:#dadce0;"></div>
<svg class="r" style="left:1860px;top:275px;" width="40" height="40" viewBox="0 0 40 40"><path d="M8.5 5.9 H27.8 V11.3 H11 V28.1 H5.7 V8.7 Q5.7 5.9 8.5 5.9 Z" fill="#4688ea"/><path d="M27.8 5.9 H30.5 Q33.3 5.9 33.3 8.7 V11.3 H27.8 Z" fill="#1b66d6"/><rect x="27.8" y="11.3" width="5.5" height="16.8" fill="#fbbc04"/><rect x="11" y="28.1" width="16.8" height="5.6" fill="#34a853"/><path d="M5.7 28.1 H11 V33.7 H8.5 Q5.7 33.7 5.7 30.9 Z" fill="#188038"/><path d="M27.8 28.1 H33.3 L27.8 33.7 Z" fill="#ea4335"/><rect x="11" y="11.3" width="16.8" height="16.8" fill="#fff"/><text x="19.6" y="24.7" text-anchor="middle" font-family="Liberation Sans" font-size="13.5" fill="#4d8fe8" letter-spacing="-0.5">31</text></svg>
<svg class="r" style="left:1866px;top:365px;" width="29" height="29" viewBox="0 0 29 29"><rect x="0" y="0" width="29" height="29" rx="3" fill="#fbbc04"/><circle cx="14.5" cy="12.5" r="5.5" fill="#fff"/><rect x="11.5" y="15" width="6" height="4" fill="#fff"/><rect x="11.5" y="20.5" width="6" height="1.8" fill="#fff"/></svg>
<svg class="r" style="left:1866px;top:449px;" width="29" height="29" viewBox="0 0 29 29"><circle cx="14.5" cy="14.5" r="14" fill="#4a8af0"/><path d="M24.4 4.6 A14 14 0 0 1 4.6 24.4 Z" fill="#3f76dc"/><path d="M11 19 L21 9" stroke="#fff" stroke-width="3.5" stroke-linecap="round"/><circle cx="7" cy="14.5" r="2.5" fill="#fbbc04"/></svg>
<div class="r" style="left:0px;top:348px;width:42px;height:609px;background:#dadcdf;"></div>
<div class="r" style="left:42px;top:348px;width:2px;height:609px;background:#c3c3c3;"></div>
<div class="r" style="left:44px;top:348px;width:63px;height:28px;background:#f8f8f8;"></div>
<div class="r" style="left:107px;top:348px;width:5px;height:35px;background:#b9bbbb;"></div>
<div class="r" style="left:0px;top:376px;width:112px;height:7px;background:#b9bbbb;"></div>
<div class="r" style="left:112px;top:348px;width:761px;height:34px;background:#f8f8f8;"></div>
<div class="r" style="left:265px;top:348px;width:150px;height:34px;background:#e6e6e6;"></div>
<div class="r" style="left:263px;top:348px;width:2px;height:34px;background:#c3c3c3;"></div>
<div class="r" style="left:415px;top:348px;width:2px;height:34px;background:#c3c3c3;"></div>
<div class="r" style="left:567px;top:348px;width:2px;height:34px;background:#c3c3c3;"></div>
<div class="r" style="left:719px;top:348px;width:2px;height:34px;background:#c3c3c3;"></div>
<div class="r" style="left:871px;top:348px;width:2px;height:34px;background:#c3c3c3;"></div>
<div class="r" style="left:112px;top:382px;width:761px;height:2px;background:#c3c3c3;"></div>
<div class="t" style="left:182.64px;top:357.96px;font-size:16.00px;color:#5f6368;">A</div>
<div class="t" style="left:334.64px;top:357.96px;font-size:16.00px;color:#5f6368;">B</div>
<div class="t" style="left:486.24px;top:357.96px;font-size:16.00px;color:#5f6368;">C</div>
<div class="t" style="left:638.24px;top:357.96px;font-size:16.00px;color:#5f6368;">U</div>
<div class="t" style="left:790.64px;top:357.96px;font-size:16.00px;color:#5f6368;">V</div>
<svg class="r" style="left:553px;top:361px;" width="8" height="10" viewBox="0 0 8 10"><path d="M7.5 0.5 V9.5 L0.5 5 Z" fill="#000"/></svg>
<svg class="r" style="left:575px;top:361px;" width="8" height="10" viewBox="0 0 8 10"><path d="M0.5 0.5 V9.5 L7.5 5 Z" fill="#000"/></svg>
<div class="r" style="left:44px;top:384px;width:67px;height:573px;background:#f8f8f8;"></div>
<div class="r" style="left:44px;top:498px;width:67px;height:30px;background:#e6e6e6;"></div>
<div class="r" style="left:111px;top:348px;width:2px;height:609px;background:#c3c3c3;"></div>
<div class="r" style="left:44px;top:414px;width:67px;height:2px;background:#c3c3c3;"></div>
<div class="r" style="left:44px;top:464px;width:67px;height:2px;background:#c3c3c3;"></div>
<div class="r" style="left:44px;top:496px;width:67px;height:2px;background:#c3c3c3;"></div>
<div class="r" style="left:44px;top:528px;width:67px;height:2px;background:#c3c3c3;"></div>
<div class="r" style="left:44px;top:560px;width:67px;height:2px;background:#c3c3c3;"></div>
<div class="r" style="left:44px;top:592px;width:67px;height:2px;background:#c3c3c3;"></div>
<div class="r" style="left:44px;top:624px;width:67px;height:2px;background:#c3c3c3;"></div>
<div class="r" style="left:44px;top:656px;width:67px;height:2px;background:#c3c3c3;"></div>
<div class="r" style="left:44px;top:688px;width:67px;height:2px;background:#c3c3c3;"></div>
<div class="r" style="left:44px;top:720px;width:67px;height:2px;background:#c3c3c3;"></div>
<div class="r" style="left:44px;top:752px;width:67px;height:2px;background:#c3c3c3;"></div>
<div class="r" style="left:44px;top:784px;width:67px;height:2px;background:#c3c3c3;"></div>
<div class="r" style="left:44px;top:816px;width:67px;height:2px;background:#c3c3c3;"></div>
<div class="r" style="left:44px;top:848px;width:67px;height:2px;background:#c3c3c3;"></div>
<div class="r" style="left:44px;top:880px;width:67px;height:2px;background:#c3c3c3;"></div>
<div class="r" style="left:44px;top:912px;width:67px;height:2px;background:#c3c3c3;"></div>
<div class="r" style="left:44px;top:944px;width:67px;height:2px;background:#c3c3c3;"></div>
<div class="t" style="left:73.02px;top:391.96px;font-size:16.00px;color:#5f6368;">1</div>
<div class="t" style="left:73.02px;top:432.96px;font-size:16.00px;color:#5f6368;">2</div>
<div class="t" style="left:73.02px;top:473.96px;font-size:16.00px;color:#5f6368;">3</div>
<div class="t" style="left:73.02px;top:505.96px;font-size:16.00px;color:#5f6368;">4</div>
<div class="t" style="left:73.02px;top:537.96px;font-size:16.00px;color:#5f6368;">5</div>
<div class="t" style="left:73.02px;top:569.96px;font-size:16.00px;color:#5f6368;">6</div>
<div class="t" style="left:73.02px;top:601.96px;font-size:16.00px;color:#5f6368;">7</div>
<div class="t" style="left:73.02px;top:633.96px;font-size:16.00px;color:#5f6368;">8</div>
<div class="t" style="left:73.02px;top:665.96px;font-size:16.00px;color:#5f6368;">9</div>
<div class="t" style="left:68.62px;top:697.96px;font-size:16.00px;color:#5f6368;">10</div>
<div class="t" style="left:69.18px;top:729.96px;font-size:16.00px;color:#5f6368;">11</div>
<div class="t" style="left:68.62px;top:761.96px;font-size:16.00px;color:#5f6368;">12</div>
<div class="t" style="left:68.62px;top:793.96px;font-size:16.00px;color:#5f6368;">13</div>
<div class="t" style="left:68.62px;top:825.96px;font-size:16.00px;color:#5f6368;">14</div>
<div class="t" style="left:68.62px;top:857.96px;font-size:16.00px;color:#5f6368;">15</div>
<div class="t" style="left:68.62px;top:889.96px;font-size:16.00px;color:#5f6368;">16</div>
<div class="t" style="left:68.62px;top:921.96px;font-size:16.00px;color:#5f6368;">17</div>
<div class="r" style="left:44px;top:946px;width:67px;height:11px;overflow:hidden"><div class="t" style="left:24.62px;top:7.16px;font-size:16.00px;color:#5f6368;">18</div></div>
<div class="r" style="left:113px;top:384px;width:760px;height:573px;background:#f8f8f8;"></div>
<div class="r" style="left:113px;top:414px;width:760px;height:2px;background:#e3e3e3;"></div>
<div class="r" style="left:113px;top:464px;width:760px;height:2px;background:#e3e3e3;"></div>
<div class="r" style="left:113px;top:496px;width:760px;height:2px;background:#e3e3e3;"></div>
<div class="r" style="left:113px;top:528px;width:760px;height:2px;background:#e3e3e3;"></div>
<div class="r" style="left:113px;top:560px;width:760px;height:2px;background:#e3e3e3;"></div>
<div class="r" style="left:113px;top:592px;width:760px;height:2px;background:#e3e3e3;"></div>
<div class="r" style="left:113px;top:624px;width:760px;height:2px;background:#e3e3e3;"></div>
<div class="r" style="left:113px;top:656px;width:760px;height:2px;background:#e3e3e3;"></div>
<div class="r" style="left:113px;top:688px;width:760px;height:2px;background:#e3e3e3;"></div>
<div class="r" style="left:113px;top:720px;width:760px;height:2px;background:#e3e3e3;"></div>
<div class="r" style="left:113px;top:752px;width:760px;height:2px;background:#e3e3e3;"></div>
<div class="r" style="left:113px;top:784px;width:760px;height:2px;background:#e3e3e3;"></div>
<div class="r" style="left:113px;top:816px;width:760px;height:2px;background:#e3e3e3;"></div>
<div class="r" style="left:113px;top:848px;width:760px;height:2px;background:#e3e3e3;"></div>
<div class="r" style="left:113px;top:880px;width:760px;height:2px;background:#e3e3e3;"></div>
<div class="r" style="left:113px;top:912px;width:760px;height:2px;background:#e3e3e3;"></div>
<div class="r" style="left:113px;top:944px;width:760px;height:2px;background:#e3e3e3;"></div>
<div class="r" style="left:263px;top:384px;width:2px;height:573px;background:#e3e3e3;"></div>
<div class="r" style="left:415px;top:384px;width:2px;height:573px;background:#e3e3e3;"></div>
<div class="r" style="left:567px;top:384px;width:2px;height:573px;background:#e3e3e3;"></div>
<div class="r" style="left:719px;top:384px;width:2px;height:573px;background:#e3e3e3;"></div>
<div class="r" style="left:871px;top:384px;width:2px;height:573px;background:#e3e3e3;"></div>
<div class="r" style="left:113px;top:384px;width:760px;height:80px;background:#ffff00;"></div>
<div class="r" style="left:263px;top:384px;width:2px;height:30px;background:#e8e800;"></div>
<div class="r" style="left:415px;top:384px;width:2px;height:30px;background:#e8e800;"></div>
<div class="r" style="left:567px;top:384px;width:2px;height:30px;background:#e8e800;"></div>
<div class="r" style="left:719px;top:384px;width:2px;height:30px;background:#e8e800;"></div>
<div class="r" style="left:113px;top:498px;width:150px;height:30px;background:#fccba0;"></div>
<div class="r" style="left:113px;top:530px;width:150px;height:30px;background:#fccba0;"></div>
<div class="r" style="left:113px;top:594px;width:150px;height:30px;background:#fccba0;"></div>
<div class="r" style="left:113px;top:626px;width:150px;height:30px;background:#fccba0;"></div>
<div class="r" style="left:113px;top:690px;width:150px;height:30px;background:#fccba0;"></div>
<div class="r" style="left:113px;top:722px;width:150px;height:30px;background:#fccba0;"></div>
<div class="r" style="left:758px;top:504px;width:4px;height:151px;background:#e4e4e4;"></div>
<div class="r" style="left:418px;top:651px;width:344px;height:4px;background:#e4e4e4;border-radius:0 0 3px 0"></div>
<div class="r" style="left:412px;top:528px;width:2px;height:125px;background:#e6e6e6;"></div>
<div class="r" style="left:425px;top:659px;width:336px;height:2px;background:#efefef;"></div>
<div class="r" style="left:113px;top:414px;width:760px;height:2px;background:#000;"></div>
<div class="r" style="left:113px;top:464px;width:760px;height:2px;background:#000;"></div>
<div class="r" style="left:113px;top:496px;width:760px;height:2px;background:#000;"></div>
<div class="r" style="left:113px;top:528px;width:760px;height:2px;background:#000;"></div>
<div class="r" style="left:113px;top:560px;width:760px;height:2px;background:#000;"></div>
<div class="r" style="left:113px;top:592px;width:760px;height:2px;background:#000;"></div>
<div class="r" style="left:113px;top:624px;width:760px;height:2px;background:#000;"></div>
<div class="r" style="left:113px;top:656px;width:760px;height:2px;background:#000;"></div>
<div class="r" style="left:113px;top:688px;width:760px;height:2px;background:#000;"></div>
<div class="r" style="left:113px;top:720px;width:760px;height:2px;background:#000;"></div>
<div class="r" style="left:113px;top:752px;width:760px;height:2px;background:#000;"></div>
<div class="r" style="left:263px;top:414px;width:2px;height:340px;background:#000;"></div>
<div class="r" style="left:415px;top:414px;width:2px;height:340px;background:#000;"></div>
<div class="r" style="left:567px;top:414px;width:2px;height:340px;background:#000;"></div>
<div class="r" style="left:719px;top:414px;width:2px;height:340px;background:#000;"></div>
<div class="r" style="left:871px;top:414px;width:2px;height:340px;background:#000;"></div>
<div class="t" style="left:141.30px;top:423.95px;font-size:15.30px;color:#000;font-weight:700;transform:scaleX(0.9959);transform-origin:0.00px 0;">NUMERO DE</div>
<div class="t" style="left:156.30px;top:445.15px;font-size:15.30px;color:#000;font-weight:700;transform:scaleX(0.9165);transform-origin:0.00px 0;">DOSSIER</div>
<div class="t" style="left:321.30px;top:444.75px;font-size:15.30px;color:#000;font-weight:700;transform:scaleX(0.9052);transform-origin:0.00px 0;">DATE</div>
<div class="t" style="left:449.60px;top:444.75px;font-size:15.30px;color:#000;font-weight:700;transform:scaleX(1.0307);transform-origin:0.00px 0;">Horodateur</div>
<div class="t" style="left:581.90px;top:423.95px;font-size:15.30px;color:#000;font-weight:700;transform:scaleX(0.9868);transform-origin:0.00px 0;">MONTANT DE LA</div>
<div class="t" style="left:604.40px;top:444.65px;font-size:15.30px;color:#000;font-weight:700;transform:scaleX(0.9298);transform-origin:0.00px 0;">VENTE TTC</div>
<div class="t" style="left:733.40px;top:423.95px;font-size:15.30px;color:#000;font-weight:700;transform:scaleX(0.9923);transform-origin:0.00px 0;">MONTANT DE LA</div>
<div class="t" style="left:759.10px;top:444.65px;font-size:15.30px;color:#000;font-weight:700;transform:scaleX(0.9605);transform-origin:0.00px 0;">VENTE HT</div>
<div class="t" style="left:168.50px;top:508.33px;font-size:15.80px;color:#111;transform:scaleX(0.9080);transform-origin:0.00px 0;">#REF!</div>
<svg class="r" style="left:254px;top:498px;" width="9" height="9" viewBox="0 0 9 9"><path d="M0 0 H9 V9 Z" fill="#c5392a"/></svg>
<div class="t" style="left:166.03px;top:539.29px;font-size:17.50px;color:#000;font-weight:700;transform:scaleX(0.9046);transform-origin:0.00px 0;">#REF!</div>
<svg class="r" style="left:254px;top:530px;" width="9" height="9" viewBox="0 0 9 9"><path d="M0 0 H9 V9 Z" fill="#c5392a"/></svg>
<div class="t" style="left:168.50px;top:604.33px;font-size:15.80px;color:#111;transform:scaleX(0.9080);transform-origin:0.00px 0;">#REF!</div>
<svg class="r" style="left:254px;top:594px;" width="9" height="9" viewBox="0 0 9 9"><path d="M0 0 H9 V9 Z" fill="#c5392a"/></svg>
<div class="t" style="left:166.03px;top:635.29px;font-size:17.50px;color:#000;font-weight:700;transform:scaleX(0.9046);transform-origin:0.00px 0;">#REF!</div>
<svg class="r" style="left:254px;top:626px;" width="9" height="9" viewBox="0 0 9 9"><path d="M0 0 H9 V9 Z" fill="#c5392a"/></svg>
<div class="t" style="left:168.50px;top:700.33px;font-size:15.80px;color:#111;transform:scaleX(0.9080);transform-origin:0.00px 0;">#REF!</div>
<svg class="r" style="left:254px;top:690px;" width="9" height="9" viewBox="0 0 9 9"><path d="M0 0 H9 V9 Z" fill="#c5392a"/></svg>
<div class="t" style="left:166.03px;top:731.29px;font-size:17.50px;color:#000;font-weight:700;transform:scaleX(0.9046);transform-origin:0.00px 0;">#REF!</div>
<svg class="r" style="left:254px;top:722px;" width="9" height="9" viewBox="0 0 9 9"><path d="M0 0 H9 V9 Z" fill="#c5392a"/></svg>
<div class="t" style="left:320.50px;top:508.33px;font-size:15.80px;color:#111;transform:scaleX(0.9080);transform-origin:0.00px 0;">#REF!</div>
<svg class="r" style="left:406px;top:498px;" width="9" height="9" viewBox="0 0 9 9"><path d="M0 0 H9 V9 Z" fill="#c5392a"/></svg>
<div class="t" style="left:320.50px;top:604.33px;font-size:15.80px;color:#111;transform:scaleX(0.9080);transform-origin:0.00px 0;">#REF!</div>
<svg class="r" style="left:406px;top:594px;" width="9" height="9" viewBox="0 0 9 9"><path d="M0 0 H9 V9 Z" fill="#c5392a"/></svg>
<div class="t" style="left:320.50px;top:700.33px;font-size:15.80px;color:#111;transform:scaleX(0.9080);transform-origin:0.00px 0;">#REF!</div>
<svg class="r" style="left:406px;top:690px;" width="9" height="9" viewBox="0 0 9 9"><path d="M0 0 H9 V9 Z" fill="#c5392a"/></svg>
<div class="t" style="left:276.30px;top:540.77px;font-size:14.80px;color:#000;font-weight:700;transform:scaleX(0.9768);transform-origin:0.00px 0;">REGULARISATION</div>
<div class="t" style="left:276.30px;top:636.77px;font-size:14.80px;color:#000;font-weight:700;transform:scaleX(0.9768);transform-origin:0.00px 0;">REGULARISATION</div>
<div class="t" style="left:276.30px;top:732.77px;font-size:14.80px;color:#000;font-weight:700;transform:scaleX(0.9768);transform-origin:0.00px 0;">REGULARISATION</div>
<div class="t" style="left:472.50px;top:700.33px;font-size:15.80px;color:#111;transform:scaleX(0.9080);transform-origin:0.00px 0;">#REF!</div>
<svg class="r" style="left:558px;top:690px;" width="9" height="9" viewBox="0 0 9 9"><path d="M0 0 H9 V9 Z" fill="#c5392a"/></svg>
<div class="t" style="left:624.50px;top:700.33px;font-size:15.80px;color:#111;transform:scaleX(0.9080);transform-origin:0.00px 0;">#REF!</div>
<svg class="r" style="left:710px;top:690px;" width="9" height="9" viewBox="0 0 9 9"><path d="M0 0 H9 V9 Z" fill="#c5392a"/></svg>
<div class="t" style="left:622.02px;top:731.29px;font-size:17.50px;color:#000;font-weight:700;transform:scaleX(0.9046);transform-origin:0.00px 0;">#REF!</div>
<svg class="r" style="left:710px;top:722px;" width="9" height="9" viewBox="0 0 9 9"><path d="M0 0 H9 V9 Z" fill="#c5392a"/></svg>
<div class="t" style="left:776.50px;top:508.33px;font-size:15.80px;color:#111;transform:scaleX(0.9080);transform-origin:0.00px 0;">#REF!</div>
<svg class="r" style="left:862px;top:498px;" width="9" height="9" viewBox="0 0 9 9"><path d="M0 0 H9 V9 Z" fill="#c5392a"/></svg>
<div class="t" style="left:774.02px;top:539.29px;font-size:17.50px;color:#000;font-weight:700;transform:scaleX(0.9046);transform-origin:0.00px 0;">#REF!</div>
<svg class="r" style="left:862px;top:530px;" width="9" height="9" viewBox="0 0 9 9"><path d="M0 0 H9 V9 Z" fill="#c5392a"/></svg>
<div class="t" style="left:776.50px;top:604.33px;font-size:15.80px;color:#111;transform:scaleX(0.9080);transform-origin:0.00px 0;">#REF!</div>
<svg class="r" style="left:862px;top:594px;" width="9" height="9" viewBox="0 0 9 9"><path d="M0 0 H9 V9 Z" fill="#c5392a"/></svg>
<div class="t" style="left:774.02px;top:635.29px;font-size:17.50px;color:#000;font-weight:700;transform:scaleX(0.9046);transform-origin:0.00px 0;">#REF!</div>
<svg class="r" style="left:862px;top:626px;" width="9" height="9" viewBox="0 0 9 9"><path d="M0 0 H9 V9 Z" fill="#c5392a"/></svg>
<div class="t" style="left:776.50px;top:700.33px;font-size:15.80px;color:#111;transform:scaleX(0.9080);transform-origin:0.00px 0;">#REF!</div>
<svg class="r" style="left:862px;top:690px;" width="9" height="9" viewBox="0 0 9 9"><path d="M0 0 H9 V9 Z" fill="#c5392a"/></svg>
<div class="t" style="left:774.02px;top:731.29px;font-size:17.50px;color:#000;font-weight:700;transform:scaleX(0.9046);transform-origin:0.00px 0;">#REF!</div>
<svg class="r" style="left:862px;top:722px;" width="9" height="9" viewBox="0 0 9 9"><path d="M0 0 H9 V9 Z" fill="#c5392a"/></svg>
<div class="r" style="left:263px;top:496px;width:154px;height:34px;border:3px solid #1a73e8;box-sizing:border-box"></div>
<div class="r" style="left:410px;top:523px;width:7px;height:9px;background:#1a73e8;"></div>
<div class="r" style="left:416px;top:498px;width:342px;height:153px;background:#f8f8f8;border-radius:4px"></div>
<div class="r" style="left:416px;top:498px;width:6px;height:153px;background:#ea4335;border-radius:4px 0 0 4px"></div>
<div class="t" style="left:440.40px;top:520.87px;font-size:20.00px;color:#ea4335;font-weight:700;letter-spacing:-0.740px;">Erreur</div>
<div class="t" style="left:440.40px;top:561.36px;font-size:18.60px;color:#34363a;letter-spacing:0.323px;">Nom de feuille inconnu :</div>
<div class="t" style="left:440.40px;top:585.06px;font-size:18.60px;color:#34363a;letter-spacing:-0.505px;">TABLEAU DES VENTES.</div>
<div class="r" style="left:113px;top:384px;width:1705px;height:573px;overflow:hidden;pointer-events:none"><div class="r" style="left:562px;top:500px;width:797px;height:200px;background:#d5e1eb;border:2px solid #1c1c1c;border-radius:46px;box-sizing:border-box"></div></div>
<div class="r" style="left:11px;top:389px;width:19px;height:19px;background:#f8f8f8;border-radius:2px"></div>
<div class="r" style="left:15px;top:398px;width:11px;height:1.5px;background:#6b6b6b;"></div>
<div class="r" style="left:20.3px;top:408px;width:1.3px;height:105px;background:#a3a3a3;"></div>
<div class="r" style="left:20.3px;top:511.7px;width:10px;height:1.3px;background:#a3a3a3;"></div>
<div class="r" style="left:1818px;top:348px;width:1px;height:609px;background:#dadce0;"></div>
<div class="r" style="left:1819px;top:382px;width:17px;height:1.5px;background:#dadce0;"></div>
<div class="r" style="left:1821px;top:385px;width:14px;height:39px;background:#dadce0;border-radius:7px"></div>
<div class="r" style="left:1819px;top:910px;width:17px;height:1px;background:#dadce0;"></div>
<div class="r" style="left:1819px;top:934px;width:17px;height:1px;background:#dadce0;"></div>
<svg class="r" style="left:1823px;top:917px;" width="9" height="6" viewBox="0 0 9 6"><path d="M0 6 L4.5 0 L9 6 Z" fill="#8a8a8a"/></svg>
<svg class="r" style="left:1823px;top:942px;" width="9" height="6" viewBox="0 0 9 6"><path d="M0 0 L4.5 6 L9 0 Z" fill="#8a8a8a"/></svg>
<div class="r" style="left:0px;top:957px;width:1836px;height:1px;background:#dadce0;"></div>
<div class="r" style="left:112px;top:958px;width:1px;height:17px;background:#e3e3e3;"></div>
<div class="r" style="left:1772px;top:958px;width:1px;height:17px;background:#dadce0;"></div>
<div class="r" style="left:1796px;top:958px;width:1px;height:17px;background:#dadce0;"></div>
<div class="r" style="left:1818px;top:957px;width:1px;height:18px;background:#dadce0;"></div>
<svg class="r" style="left:1781px;top:962px;" width="6" height="9" viewBox="0 0 6 9"><path d="M6 0 L0 4.5 L6 9 Z" fill="#8a8a8a"/></svg>
<svg class="r" style="left:1806px;top:962px;" width="6" height="9" viewBox="0 0 6 9"><path d="M0 0 L6 4.5 L0 9 Z" fill="#8a8a8a"/></svg>
<div class="r" style="left:0px;top:975px;width:169px;height:1px;background:#dadce0;"></div>
<div class="r" style="left:335px;top:975px;width:1501px;height:1px;background:#dadce0;"></div>
<svg class="r" style="left:76px;top:995px;" width="17" height="17" viewBox="0 0 17 17"><path d="M8.5 0.5 V16.5 M0.5 8.5 H16.5" stroke="#5f6368" stroke-width="2.8"/></svg>
<svg class="r" style="left:122px;top:995px;" width="18" height="18" viewBox="0 0 18 18"><g fill="#5f6368"><rect x="0" y="0.5" width="18" height="2.6"/><rect x="0" y="5.3" width="18" height="2.6"/><rect x="0" y="10.1" width="18" height="2.6"/><rect x="0" y="14.9" width="18" height="2.6"/></g></svg>
<div class="r" style="left:169px;top:975px;width:4.5px;height:59px;background:#e6e6e6;"></div>
<div class="r" style="left:330.5px;top:975px;width:4.5px;height:59px;background:#e6e6e6;"></div>
<div class="t" style="left:199.60px;top:994.45px;font-size:20.50px;color:#188038;letter-spacing:0.176px;">Feuille 1</div>
<svg class="r" style="left:293px;top:1000.5px;" width="13" height="7" viewBox="0 0 13 7"><path d="M0 0 H13 L6.5 7 Z" fill="#188038"/></svg>
<div class="r" style="left:1673px;top:977px;width:1.5px;height:57px;background:#dadce0;"></div>
<svg class="r" style="left:1691px;top:990px;" width="28" height="32" viewBox="0 0 28 32"><path d="M3 0.5 H25 Q27.5 0.5 27.5 3 V24.5 Q27.5 27 25 27 H17 L14 30.5 L11 27 H3 Q0.5 27 0.5 24.5 V3 Q0.5 0.5 3 0.5 Z" fill="#1fa463"/><path d="M14 5 Q15 12.5 22 14 Q15 15.5 14 23 Q13 15.5 6 14 Q13 12.5 14 5 Z" fill="#fff"/></svg>
<div class="t" style="left:1740.00px;top:995.25px;font-size:20.50px;color:#16a061;transform:scaleX(0.8510);transform-origin:0.00px 0;">Explorer</div>
<svg class="r" style="left:1873px;top:986px;" width="11" height="16" viewBox="0 0 11 16"><path d="M1.5 1.5 L8.5 8 L1.5 14.5" fill="none" stroke="#5f6368" stroke-width="2.8"/></svg>
<div class="r" style="left:0px;top:1034px;width:1920px;height:46px;background:#2e2522;"></div>
<svg class="r" style="left:15px;top:1044px;" width="26" height="26" viewBox="0 0 26 26"><g fill="#fff"><path d="M0.5 3.5 L11 2 V12 H0.5 Z"/><path d="M12.5 1.8 L25 0 V12 H12.5 Z"/><path d="M0.5 13.5 H11 V23.5 L0.5 22 Z"/><path d="M12.5 13.5 H25 V25.5 L12.5 23.8 Z"/></g></svg>
<svg class="r" style="left:68px;top:1044px;" width="27" height="27" viewBox="0 0 27 27"><circle cx="16.5" cy="9" r="8" fill="none" stroke="#fff" stroke-width="1.6"/><path d="M11 15 L1 25.5" stroke="#fff" stroke-width="1.8"/></svg>
<svg class="r" style="left:122px;top:1044px;" width="27" height="26" viewBox="0 0 27 26"><g fill="none" stroke="#fff" stroke-width="1.2"><path d="M1.3 1.2 V4.5 H16.75 V1.2"/><rect x="1.3" y="7.4" width="15.45" height="9.6"/><path d="M1.3 23.7 V20.75 H16.75 V23.7"/><path d="M23.4 1.2 V23.7"/></g><rect x="22.1" y="8.3" width="2.6" height="2.6" fill="#fff"/></svg>
<svg class="r" style="left:182px;top:1047px;" width="24" height="21" viewBox="0 0 24 21"><path d="M0.5 3 Q0.5 1 2.5 1 H8 L10 3 H22 Q23.5 3 23.5 4.5 V19 Q23.5 20.5 22 20.5 H2 Q0.5 20.5 0.5 19 Z" fill="#f9d35d"/><path d="M0.5 3 Q0.5 1 2.5 1 H8 L10 3 V5 H0.5 Z" fill="#e8a317"/><path d="M5 20.5 V13 H19 V20.5 H15.5 V16 H8.5 V20.5 Z" fill="#2a8ad8"/></svg>
<div class="r" style="left:173px;top:1076.5px;width:44px;height:3.5px;background:#f2d9b6;"></div>
<svg class="r" style="left:239px;top:1045px;" width="25" height="23" viewBox="0 0 25 23"><path d="M0.5 3 Q0.5 1 2.5 1 H8 L10 3 H22.5 Q24 3 24 4.5 V19 Q24 21 22 21 H2 Q0.5 21 0.5 19 Z" fill="#f9c846"/><path d="M0.5 6 H24 V19 Q24 21 22 21 H2 Q0.5 21 0.5 19 Z" fill="#f5a623" opacity="0.7"/><path d="M7.5 21 L24 8 V21 Z M12 19 L21.5 12 V19 Z" fill="#1f5fbf" fill-rule="evenodd"/></svg>
<svg class="r" style="left:290px;top:1040px;" width="36" height="34" viewBox="0 0 36 34"><circle cx="18.1" cy="16.6" r="11.9" fill="#2f7fe0"/><path d="M10 8 Q18 3 26 9 Q30 14 28 21 Q25 12 18 10 Z" fill="#4aa3ef"/><path d="M8 24 Q12 28.5 19 28.6 L10 26 Z" fill="#1d3f9e"/><path d="M7.5 14.2 L22 13.2 L22.6 25.8 L7.5 21.4 Z" fill="#f8f8f8"/><path d="M9 15 L15 19 L21 15" fill="none" stroke="#d8d8d8" stroke-width="0.8"/></svg>
<svg class="r" style="left:352px;top:1044px;" width="25" height="25" viewBox="0 0 25 25"><ellipse cx="12.5" cy="12.5" rx="12" ry="6.5" transform="rotate(-35 12.5 12.5)" fill="none" stroke="#f4c531" stroke-width="2.2"/><path d="M5.5 13 H19.5 Q20 6 12.5 6 Q5.5 6 5.5 13 Q5.5 20 12.5 20 Q17 20 19 17" fill="none" stroke="#1d82d9" stroke-width="3.6"/></svg>
<svg class="r" style="left:409px;top:1045px;" width="26" height="26" viewBox="0 0 26 26"><circle cx="13" cy="13" r="12" fill="#1f94d6"/><path d="M3 7 Q7 1 14 1 Q22 1.5 25 10 Q25.5 16 20.5 17 Q16 17.5 15 14 Q18 9 12 7.5 Q6 6.5 3 7 Z" fill="#45c4a0"/><path d="M14 1 Q22 1.5 25 10 Q25.5 16 20.5 17 Q23 12 20 8 Q18 4 14 1 Z" fill="#5ccb5f"/><path d="M1 13 Q1.5 8 7 7.5 Q14 7.5 14 13 Q14 19 21 20.5 Q17 25 12 25 Q1 23.5 1 13 Z" fill="#0f62b0"/><path d="M14 13 Q15.5 16.5 20.5 17 Q17.5 14 14 13 Z" fill="#2e2522"/></svg>
<div class="r" style="left:451.5px;top:1034px;width:56px;height:46px;background:#5a504d;"></div>
<svg class="r" style="left:467px;top:1045px;" width="24" height="24" viewBox="0 0 24 24"><circle cx="12" cy="12" r="11.5" fill="#db4437"/><path d="M12 12 L22 6.5 A11.5 11.5 0 0 1 12 23.5 Z" fill="#f4c20d"/><path d="M12 12 L12 23.5 A11.5 11.5 0 0 1 2 6.3 Z" fill="#0f9d58"/><circle cx="12" cy="12" r="5.3" fill="#fff"/><circle cx="12" cy="12" r="4.2" fill="#4285f4"/></svg>
<div class="r" style="left:451.5px;top:1076.5px;width:56px;height:3.5px;background:#f2d9b6;"></div>
<svg class="r" style="left:518px;top:1040px;" width="36" height="34" viewBox="0 0 36 34"><path d="M14.8 5.3 L28 7.9 L26.7 27 L6 21.4 Z" fill="#8fc6ef"/><path d="M14.8 5.3 L28 7.9 L27.6 9.5 L14.2 7.2 Z" fill="#d0d4d8"/><path d="M24 9 L28 9.5 L26.7 27 L20.5 25.3 Z" fill="#e4eef4"/><path d="M6 21.4 L12 12 L13 23.3 Z" fill="#3f8fb0" opacity="0.7"/><path d="M11 22.5 L20 24.8 L21 22 L12 20 Z" fill="#35a8a0" opacity="0.8"/></svg>
<div class="r" style="left:515px;top:1076.5px;width:43px;height:3.5px;background:#f2d9b6;"></div>
<svg class="r" style="left:1212px;top:1046px;" width="25" height="22" viewBox="0 0 25 22"><path d="M2 4 Q2 1 5 1 H20 Q23 1 23 4 V11 H2 Z" fill="#e8e8e8"/><rect x="1" y="10" width="23" height="4" fill="#cfcfcf"/><rect x="4" y="16" width="10" height="5" fill="#fff"/><path d="M14 13 L22 21 M22 13 L14 21" stroke="#e02020" stroke-width="2.5"/></svg>
<svg class="r" style="left:1260px;top:1045px;" width="24" height="24" viewBox="0 0 24 24"><rect x="1" y="8" width="22" height="14" rx="1.5" fill="#d8d8d8" stroke="#444" stroke-width="1"/><g fill="#333"><rect x="4" y="11" width="16" height="1.5"/><rect x="4" y="14" width="16" height="1.5"/><rect x="4" y="17" width="16" height="1.5"/></g><path d="M18 6 L21 3 V8 Z" fill="#d4d400"/></svg>
<svg class="r" style="left:1307px;top:1048px;" width="25" height="16" viewBox="0 0 25 16"><path d="M5 15 Q0.5 15 0.5 11 Q0.5 7 5 7 Q7 1.5 13 1.5 Q19 1.5 20 7 Q24.5 7.5 24.5 11 Q24.5 15 20 15 Z" fill="#d0d0d0"/><path d="M5 15 Q0.5 15 0.5 11 Q0.5 8 4 7.2 L20 15 Z" fill="#a8a8a8"/></svg>
<svg class="r" style="left:1356px;top:1046px;" width="24" height="20" viewBox="0 0 24 20"><path d="M5 18.5 Q0.5 18.5 0.5 14 Q0.5 10 4.5 9.5 Q5.5 1.5 12 1.5 Q18.5 1.5 19.5 9.5 Q23.5 10 23.5 14 Q23.5 18.5 19 18.5 Z" fill="#f6f6f6"/><path d="M8.5 12 Q12 15 15.5 12" fill="none" stroke="#3a8be0" stroke-width="1.6"/></svg>
<svg class="r" style="left:1403px;top:1045px;" width="25" height="24" viewBox="0 0 25 24"><g fill="#fff"><path d="M6.5 1 L12.5 5 L6.5 9 L0.5 5 Z"/><path d="M18.5 1 L24.5 5 L18.5 9 L12.5 5 Z"/><path d="M6.5 9 L12.5 13 L6.5 17 L0.5 13 Z"/><path d="M18.5 9 L24.5 13 L18.5 17 L12.5 13 Z"/><path d="M12.5 15 L18.5 19 L12.5 23 L6.5 19 Z"/></g></svg>
<svg class="r" style="left:1451px;top:1045px;" width="26" height="25" viewBox="0 0 26 25"><path d="M11 0.5 Q16 3 21.5 3 V11 Q21 19 11 23.5 Q1 19 0.5 11 V3 Q6 3 11 0.5 Z" fill="#fff" stroke="#111" stroke-width="1"/><path d="M11 0.5 V23.5 M0.5 11 H21.5" stroke="#111" stroke-width="1.3"/><circle cx="19" cy="18.5" r="6.3" fill="#1e9e4a"/><path d="M16 18.5 L18.3 20.8 L22 16.5" fill="none" stroke="#fff" stroke-width="1.6"/></svg>
<svg class="r" style="left:1503px;top:1046px;" width="20" height="21" viewBox="0 0 20 21"><g fill="none" stroke="#fff" stroke-width="1.3"><path d="M1 20 A19 19 0 0 1 19 2"/><path d="M5 20 A15 15 0 0 1 19 6"/><path d="M9 20 A11 11 0 0 1 19 10"/></g><circle cx="17" cy="18" r="2" fill="#fff"/></svg>
<svg class="r" style="left:1547px;top:1044px;" width="25" height="25" viewBox="0 0 25 25"><path d="M12.5 1 Q17 5 19 3 Q20 8 24 9 Q21 12 24 17 Q19 17 18 22 Q14 19 10 24 Q9 19 3 19 Q6 15 1 12 Q6 10 4 4 Q9 6 12.5 1 Z" fill="#ff7800"/><circle cx="13" cy="13" r="5.5" fill="#fff"/><text x="13" y="17" text-anchor="middle" font-family="Liberation Sans" font-weight="700" font-size="10" fill="#ff7800">a</text></svg>
<svg class="r" style="left:1595px;top:1047px;" width="25" height="18" viewBox="0 0 25 18"><rect x="6" y="5" width="18" height="12" fill="none" stroke="#fff" stroke-width="1.4"/><rect x="8" y="7" width="14" height="8" fill="#fff" opacity="0.85"/><path d="M1 9 H6 M2 3 V7 M5 3 V7" stroke="#fff" stroke-width="1.4"/></svg>
<svg class="r" style="left:1644px;top:1046px;" width="23" height="21" viewBox="0 0 23 21"><path d="M1 7 H5 L10 2 V19 L5 14 H1 Z" fill="none" stroke="#fff" stroke-width="1.3"/><path d="M14 7 L21 14 M21 7 L14 14" stroke="#fff" stroke-width="1.3"/></svg>
<svg class="r" style="left:1691px;top:1044px;" width="26" height="26" viewBox="0 0 26 26"><path d="M22 5 Q17 0.5 12 1 Q2 2 1 12 Q1 22 11 24.5 Q18 25.5 23 20 L18 16 Q15 19 12 18.5 Q6 17.5 6.5 12 Q7 6.5 12.5 6 Q16 6 18 8.5 Z" fill="#e0262d"/><path d="M24 2 L12 16" stroke="#c98b3a" stroke-width="2.5"/><path d="M9 15 Q6 20 5 24 Q10 22 13 18 Z" fill="#f3c27a"/></svg>
<svg class="r" style="left:1741px;top:1046px;" width="22" height="22" viewBox="0 0 22 22"><path d="M8 19 L17 3 Q18 1.5 19.3 2.3 Q20.5 3 19.8 4.5 L10.8 20.5 Z M9 17 L12 18.7" fill="none" stroke="#fff" stroke-width="1.1"/><path d="M8.5 12 Q3 11 2 15.5 Q1.5 20 6 20 M16.5 8.5 Q21 7.5 21 10 Q21 12 17 11.5" fill="none" stroke="#fff" stroke-width="1.2"/></svg>
<div class="t" style="left:1787.00px;top:1048.84px;font-size:18.50px;color:#f4f4f4;letter-spacing:-0.812px;">17:40</div>
<svg class="r" style="left:1857px;top:1044px;" width="26" height="26" viewBox="0 0 26 26"><path d="M1.5 1.5 H24.5 V19.5 H16.5 L13 23.5 L9.5 19.5 H1.5 Z" fill="none" stroke="#fff" stroke-width="1.3"/></svg>
<div class="r" style="left:1911px;top:1034px;width:2px;height:46px;background:#8a8380;"></div>
</body></html>
